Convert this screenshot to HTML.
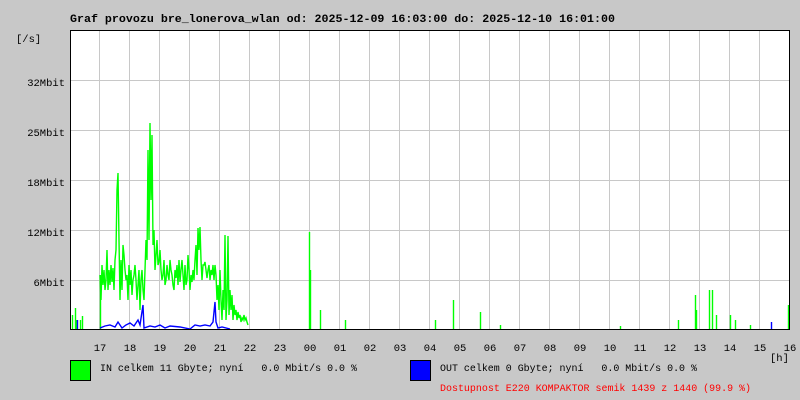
<!DOCTYPE html>
<html><head><meta charset="utf-8"><style>
html,body{margin:0;padding:0;background:#c8c8c8;}
body{width:800px;height:400px;position:relative;overflow:hidden;}
svg{position:absolute;left:0;top:0;}
text{font-family:"Liberation Mono",monospace;font-size:10.5px;fill:#000;white-space:pre;}
.t{font-weight:bold;font-size:11.4px;}
</style></head><body>
<svg width="800" height="400" viewBox="0 0 800 400" shape-rendering="crispEdges">
<text class="t" x="70" y="22" textLength="545" lengthAdjust="spacingAndGlyphs">Graf provozu bre_lonerova_wlan od: 2025-12-09 16:03:00 do: 2025-12-10 16:01:00</text>
<rect x="70" y="30" width="720" height="300" fill="#fff"/>
<g stroke="#c8c8c8" stroke-width="1">
<path d="M99.5 30V330M129.5 30V330M159.5 30V330M189.5 30V330M219.5 30V330M249.5 30V330M279.5 30V330M309.5 30V330M339.5 30V330M369.5 30V330M399.5 30V330M429.5 30V330M459.5 30V330M489.5 30V330M519.5 30V330M549.5 30V330M579.5 30V330M609.5 30V330M639.5 30V330M669.5 30V330M699.5 30V330M729.5 30V330M759.5 30V330"/>
<path d="M70 80.5H790M70 130.5H790M70 180.5H790M70 230.5H790M70 280.5H790"/>
</g>
<g fill="none" stroke="#00ff00" stroke-width="1.4" shape-rendering="auto">
<polyline points="100,275 101,300 102,265 103,285 104,270 105,290 106,280 107,250 108,290 109,270 110,285 111,265 112,282 113,268 114,290 115,260 116,250 117,190 118,173 119,240 120,300 121,260 122,290 123,245 124,255 125,270 126,280 127,275 128,300 129,265 130,285 131,270 132,295 133,280 134,275 135,265 136,280 137,300 138,285 139,270 140,310 141,280 142,270 143,290 144,300 145,270 146,240 147,260 148,150 149,240 150,123 151,200 152,135 153,245 154,230 155,270 156,255 157,240 158,265 159,262 160,250 161,270 162,280 163,275 164,260 165,285 166,280 167,265 168,275 169,280 170,260 171,270 172,275 173,285 174,290 175,270 176,278 177,265 178,285 179,260 180,282 181,270 182,260 183,275 184,290 185,265 186,285 187,280 188,255 189,270 190,290 191,275 192,282 193,270 194,280 195,260 196,245 197,275 198,228 199,250 200,227 201,260 202,280 203,265 204,265 205,262 206,270 207,278 208,270 209,265 210,280 211,270 212,275 213,265 214,280 215,265 216,275 217,300 218,285 219,310 220,270 221,300 222,320 223,290 224,310 225,235 226,320 227,300 228,236 229,315 230,290 231,310 232,295 233,320 234,305 235,315 236,310 237,320 238,312 239,318 240,315 241,322 242,318 243,320 244,315 245,320 246,318 247,322 248,325"/>
<path d="M100.5 330V275M72.5 330V315M75.5 330V308M76.5 330V320M80.5 330V320M82.5 330V316M309.5 330V232M310.5 330V270M320.5 330V310M345.5 330V320M435.5 330V320M453.5 330V300M480.5 330V312M500.5 330V325M620.5 330V326M678.5 330V320M695.5 330V295M696.5 330V310M709.5 330V290M712.5 330V290M716.5 330V315M730.5 330V315M735.5 330V320M750.5 330V325M788.5 330V305"/>
</g>
<g fill="none" stroke="#0000ff" stroke-width="1.4" shape-rendering="auto">
<polyline points="100,328 105,326 110,325 115,327 118,322 122,328 126,325 130,323 134,326 138,320 140,325 143,305 144,328 150,326 155,327 160,325 165,328 170,326 180,327 190,329 195,325 200,326 205,325 210,326 213,322 214,312 215,302 216,322 218,328 222,327 230,329"/>
<path d="M771.5 330V322M77.5 330V320"/>
</g>
<rect x="70.5" y="30.5" width="719" height="299" fill="none" stroke="#000"/>
<text x="16" y="42">[/s]</text>
<g text-anchor="end">
<text x="65" y="86">32Mbit</text>
<text x="65" y="136">25Mbit</text>
<text x="65" y="186">18Mbit</text>
<text x="65" y="236">12Mbit</text>
<text x="65" y="286">6Mbit</text>
</g>
<g text-anchor="middle">
<text x="100" y="351">17</text><text x="130" y="351">18</text><text x="160" y="351">19</text><text x="190" y="351">20</text><text x="220" y="351">21</text><text x="250" y="351">22</text><text x="280" y="351">23</text><text x="310" y="351">00</text><text x="340" y="351">01</text><text x="370" y="351">02</text><text x="400" y="351">03</text><text x="430" y="351">04</text><text x="460" y="351">05</text><text x="490" y="351">06</text><text x="520" y="351">07</text><text x="550" y="351">08</text><text x="580" y="351">09</text><text x="610" y="351">10</text><text x="640" y="351">11</text><text x="670" y="351">12</text><text x="700" y="351">13</text><text x="730" y="351">14</text><text x="760" y="351">15</text><text x="790" y="351">16</text>
</g>
<text x="770" y="361">[h]</text>
<rect x="70.5" y="360.5" width="20" height="20" fill="#00ff00" stroke="#000"/>
<text x="100" y="371" xml:space="preserve" textLength="257" lengthAdjust="spacingAndGlyphs">IN celkem 11 Gbyte; nyní   0.0 Mbit/s 0.0 %</text>
<rect x="410.5" y="360.5" width="20" height="20" fill="#0000ff" stroke="#000"/>
<text x="440" y="371" xml:space="preserve" textLength="257" lengthAdjust="spacingAndGlyphs">OUT celkem 0 Gbyte; nyní   0.0 Mbit/s 0.0 %</text>
<text x="440" y="391" style="fill:#ff0000" textLength="311" lengthAdjust="spacingAndGlyphs">Dostupnost E220 KOMPAKTOR semik 1439 z 1440 (99.9 %)</text>
</svg>
</body></html>
